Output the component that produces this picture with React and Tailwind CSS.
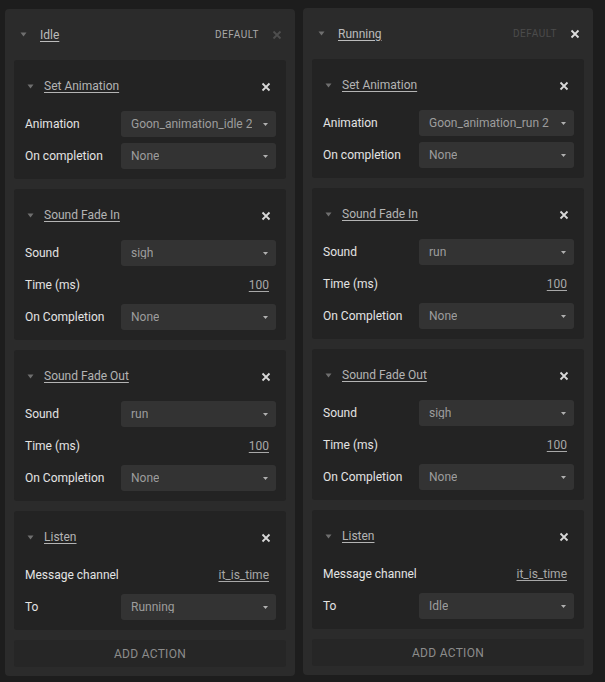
import React from 'react';

// small down-pointing triangle used for collapse toggles
function Toggle() {
  return (
    <svg width="7" height="5" viewBox="0 0 7 5" className="shrink-0">
      <polygon points="0.5,0.5 6.5,0.5 3.5,4.5" fill="#6f6f6f" />
    </svg>
  );
}

function Close({ color = '#d8d8d8' }) {
  return (
    <svg width="10" height="10" viewBox="0 0 10 10" className="shrink-0">
      <path d="M1.5 1.5 L8.5 8.5 M8.5 1.5 L1.5 8.5" stroke={color} strokeWidth="1.8" />
    </svg>
  );
}

function Select({ value }) {
  return (
    <div className="flex items-center justify-between h-[26px] rounded-[3px] bg-[#333333] pl-[10px] pr-[8px]">
      <span className="text-[#9d9d9d] truncate">{value}</span>
      <svg width="5" height="3" viewBox="0 0 5 3" className="shrink-0 ml-1">
        <polygon points="0,0 5,0 2.5,3" fill="#b0b0b0" />
      </svg>
    </div>
  );
}

function Row({ label, select, value }) {
  return (
    <div className="grid grid-cols-[96px_1fr] items-center h-[26px]">
      <span className="text-[#e4e4e4]">{label}</span>
      {select !== undefined ? (
        <Select value={select} />
      ) : (
        <span className="text-right pr-[7px] text-[#a8a8a8] underline underline-offset-2">{value}</span>
      )}
    </div>
  );
}

function ActionCard({ title, rows }) {
  return (
    <div className="rounded-[3px] bg-[#232323] pl-[11px] pr-[10px] pt-[18px] pb-[10px]">
      <div className="flex items-center h-[16px] pl-[2px] pr-[5px]">
        <Toggle />
        <span className="ml-[10px] text-[#b4b4b4] underline underline-offset-2">{title}</span>
        <span className="ml-auto pt-[2px]"><Close /></span>
      </div>
      <div className="mt-[17px] flex flex-col gap-[6px]">
        {rows.map((r) => (
          <Row key={r.label} {...r} />
        ))}
      </div>
    </div>
  );
}

function StateColumn({ name, isDefault, actions }) {
  return (
    <div className="w-[290px] rounded-[4px] bg-[#2b2b2b] px-[9px] pb-[9px]">
      <div className="flex items-center h-[51px] pl-[6px] pr-[4px]">
        <Toggle />
        <span className="ml-[13px] text-[#bcbcbc] underline underline-offset-2">{name}</span>
        <span
          className={
            'ml-auto text-[10px] tracking-[0.6px] ' +
            (isDefault ? 'text-[#a9a9a9]' : 'text-[#4c4c4c]')
          }
        >
          DEFAULT
        </span>
        <span className="ml-[13px]">
          <Close color={isDefault ? '#4e4e4e' : '#dedede'} />
        </span>
      </div>
      <div className="flex flex-col gap-[10px]">
        {actions.map((a) => (
          <ActionCard key={a.title} {...a} />
        ))}
        <div className="h-[27px] rounded-[3px] bg-[#262626] flex items-center justify-center text-[#8c8c8c] tracking-[0.3px]">
          ADD ACTION
        </div>
      </div>
    </div>
  );
}

const idle = [
  {
    title: 'Set Animation',
    rows: [
      { label: 'Animation', select: 'Goon_animation_idle 2' },
      { label: 'On completion', select: 'None' },
    ],
  },
  {
    title: 'Sound Fade In',
    rows: [
      { label: 'Sound', select: 'sigh' },
      { label: 'Time (ms)', value: '100' },
      { label: 'On Completion', select: 'None' },
    ],
  },
  {
    title: 'Sound Fade Out',
    rows: [
      { label: 'Sound', select: 'run' },
      { label: 'Time (ms)', value: '100' },
      { label: 'On Completion', select: 'None' },
    ],
  },
  {
    title: 'Listen',
    rows: [
      { label: 'Message channel', value: 'it_is_time' },
      { label: 'To', select: 'Running' },
    ],
  },
];

const running = [
  {
    title: 'Set Animation',
    rows: [
      { label: 'Animation', select: 'Goon_animation_run 2' },
      { label: 'On completion', select: 'None' },
    ],
  },
  {
    title: 'Sound Fade In',
    rows: [
      { label: 'Sound', select: 'run' },
      { label: 'Time (ms)', value: '100' },
      { label: 'On Completion', select: 'None' },
    ],
  },
  {
    title: 'Sound Fade Out',
    rows: [
      { label: 'Sound', select: 'sigh' },
      { label: 'Time (ms)', value: '100' },
      { label: 'On Completion', select: 'None' },
    ],
  },
  {
    title: 'Listen',
    rows: [
      { label: 'Message channel', value: 'it_is_time' },
      { label: 'To', select: 'Idle' },
    ],
  },
];

export default function App() {
  return (
    <div className="w-[605px] h-[682px] bg-[#1d1d1d] font-['Roboto',sans-serif] text-[12px] leading-none">
      <div className="flex items-start gap-[8px] pl-[5px] pt-[9px]">
        <StateColumn name="Idle" isDefault actions={idle} />
        <div className="-mt-px">
          <StateColumn name="Running" actions={running} />
        </div>
      </div>
    </div>
  );
}
